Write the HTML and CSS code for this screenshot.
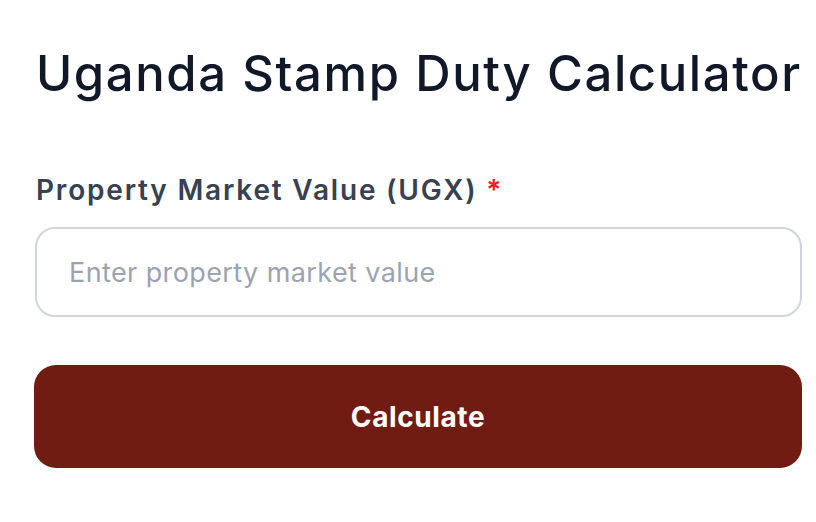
FILE: index.html
```html
<!DOCTYPE html>
<html lang="en">
<head>
  <meta charset="UTF-8">
  <title>Uganda Stamp Duty Calculator</title>
  <link rel="stylesheet" href="styles.css">
</head>
<body>
  <div class="calculator">
    <h1>Uganda Stamp Duty Calculator</h1>

    <div class="field">
      <label for="marketValue">Property Market Value (UGX) <span class="required">*</span></label>
      <input type="text" id="marketValue" placeholder="Enter property market value">
    </div>

    <button class="calc-btn">Calculate</button>
  </div>
</body>
</html>
```

FILE: styles.css
```css
body {
  margin: 0;
  font-family: Inter, 'Noto Sans', sans-serif;
  background-color: #fff;
  color: #111827;
}
.calculator {
  width: 768px;
  padding: 44px 0 0 34px;
}
h1 {
  margin: 0 0 68px 2px;
  font-size: 49px;
  line-height: 60px;
  font-weight: 500;
  letter-spacing: 1.6px;
  color: #111827;
  white-space: nowrap;
}
.field {
  display: flex;
  flex-direction: column;
  gap: 19px;
  margin-bottom: 48px;
}
.field label {
  margin-left: 2px;
  font-size: 28px;
  line-height: 36px;
  font-weight: 600;
  letter-spacing: 1.8px;
  color: #374151;
}
.required {
  color: #dc2626;
}
.field input {
  box-sizing: border-box;
  width: 767px;
  height: 90px;
  margin-left: 1px;
  padding: 0 32px;
  border: 2px solid #d1d5db;
  border-radius: 20px;
  font-family: inherit;
  font-size: 27px;
  letter-spacing: 0.4px;
  color: #111827;
  outline: none;
}
.field input::placeholder {
  color: #9ca3af;
}
.calc-btn {
  display: block;
  width: 768px;
  height: 103px;
  border: none;
  border-radius: 22px;
  background-color: #701c13;
  color: #fff;
  font-family: inherit;
  font-size: 28px;
  font-weight: 700;
  letter-spacing: 0.6px;
  cursor: pointer;
}
```
